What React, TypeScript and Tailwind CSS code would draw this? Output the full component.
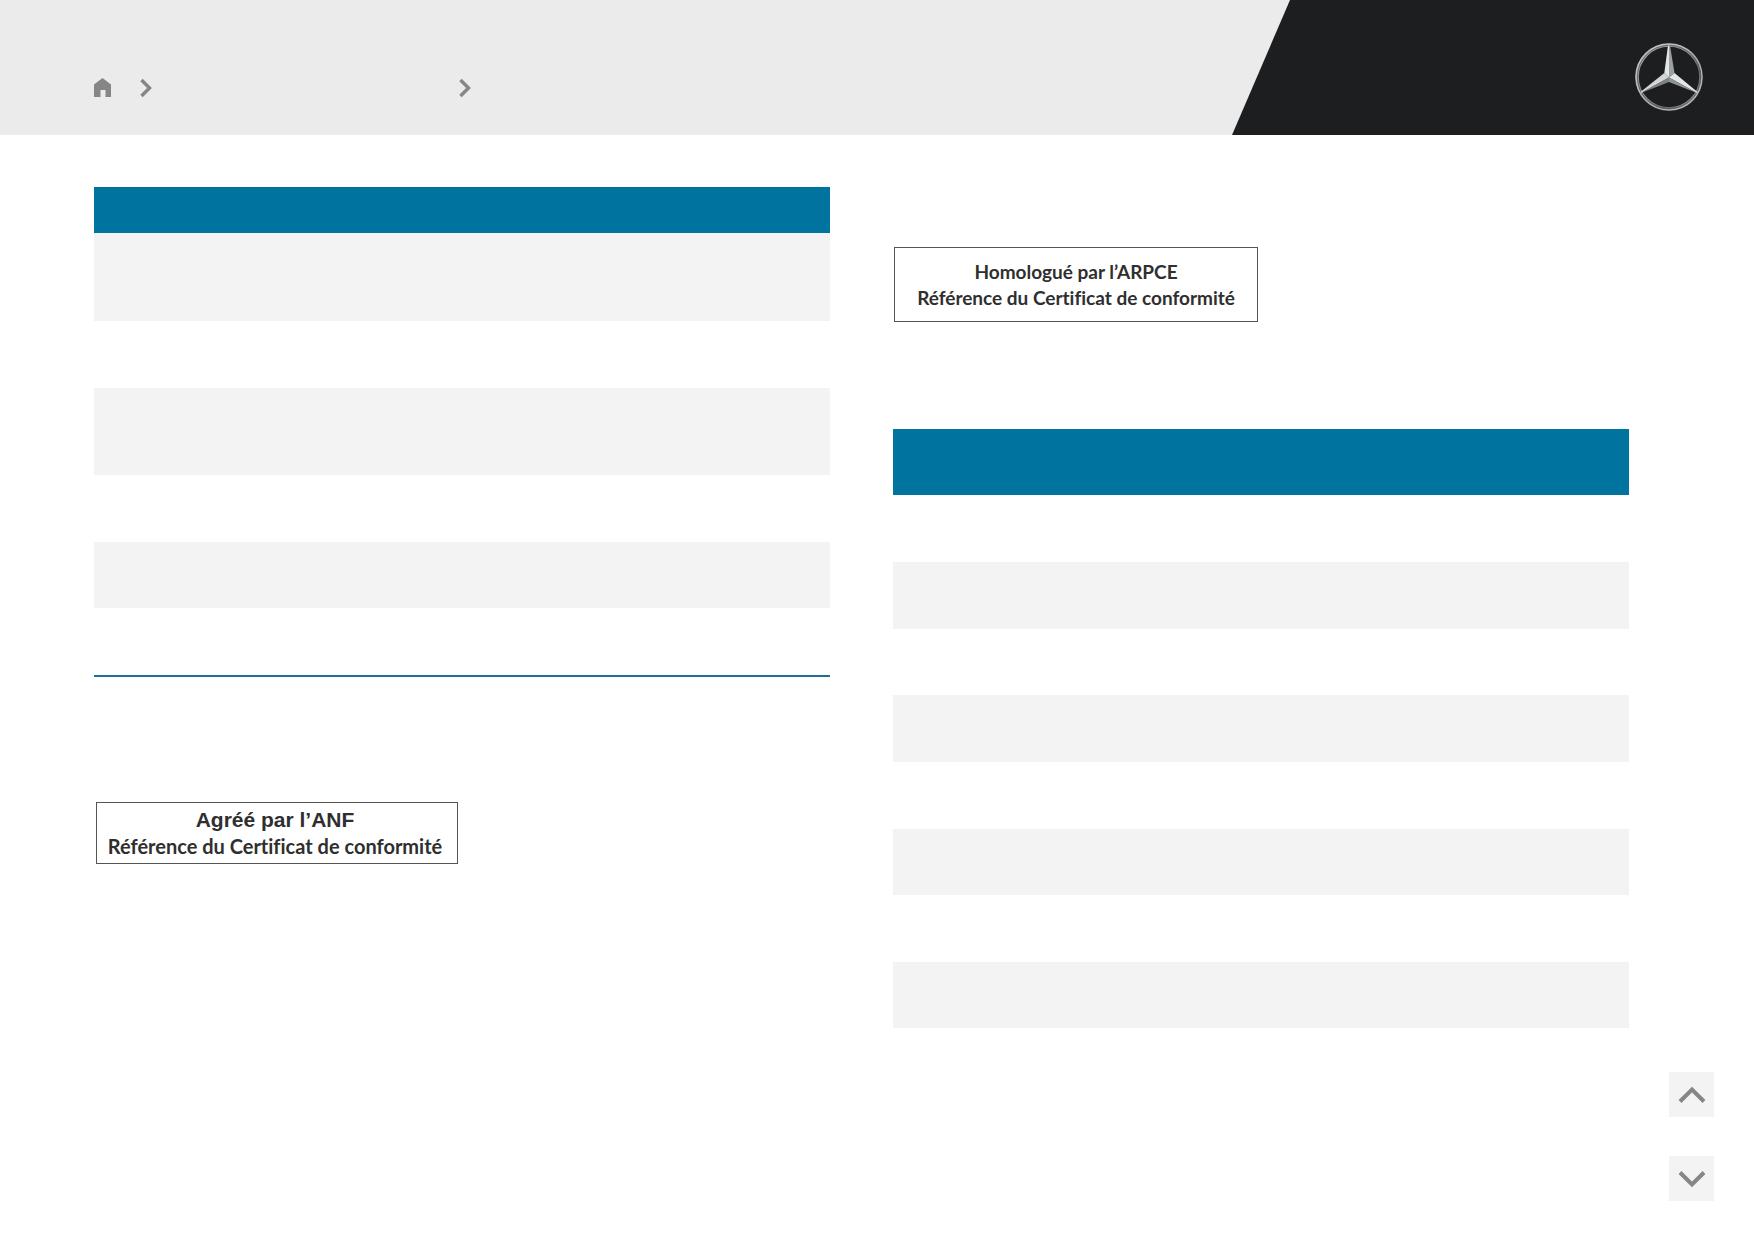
const leftRows = [
  { id: 'l1', height: 'h-[88px]', shaded: true },
  { id: 'l2', height: 'h-[67px]', shaded: false },
  { id: 'l3', height: 'h-[87px]', shaded: true },
  { id: 'l4', height: 'h-[67px]', shaded: false },
  { id: 'l5', height: 'h-[66px]', shaded: true },
  { id: 'l6', height: 'h-[67px]', shaded: false },
]

const rightRows = [
  { id: 'r1', height: 'h-[67px]', shaded: false },
  { id: 'r2', height: 'h-[67px]', shaded: true },
  { id: 'r3', height: 'h-[66px]', shaded: false },
  { id: 'r4', height: 'h-[67px]', shaded: true },
  { id: 'r5', height: 'h-[67px]', shaded: false },
  { id: 'r6', height: 'h-[66px]', shaded: true },
  { id: 'r7', height: 'h-[67px]', shaded: false },
  { id: 'r8', height: 'h-[66px]', shaded: true },
]

type Row = { id: string; height: string; shaded: boolean }

function StripedTable({ headHeight, rows }: { headHeight: string; rows: Row[] }) {
  return (
    <table className="w-full">
      <thead>
        <tr className="bg-[#00739f]">
          <th className={`p-0 ${headHeight}`} />
        </tr>
      </thead>
      <tbody>
        {rows.map((row) => (
          <tr key={row.id} className={row.shaded ? 'bg-[#f3f3f3]' : 'bg-white'}>
            <td className={`p-0 ${row.height}`} />
          </tr>
        ))}
      </tbody>
    </table>
  )
}

function Crumb() {
  return (
    <svg className="w-3 h-5 shrink-0" viewBox="0 0 12 20" fill="none" stroke="#868686" strokeWidth="3.4" aria-hidden="true">
      <path d="M1.500 2 9.500 10l-8 8" />
    </svg>
  )
}

function StarLogo() {
  return (
    <svg className="w-[70px] h-[70px]" viewBox="0 0 70 70" role="img" aria-label="Mercedes-Benz">
      <defs>
        <linearGradient id="ring" x1="0" y1="0" x2="1" y2="1">
          <stop offset="0" stopColor="#a9afb1" />
          <stop offset="0.45" stopColor="#8b9193" />
          <stop offset="0.7" stopColor="#6a7072" />
          <stop offset="1" stopColor="#a5abad" />
        </linearGradient>
      </defs>
      <circle cx="35" cy="35" r="32" fill="none" stroke="url(#ring)" strokeWidth="3.6" />
      <circle cx="35" cy="35" r="31.6" fill="none" stroke="#3f4446" strokeWidth="0.6" />
      <circle cx="35" cy="35" r="33" fill="none" stroke="#cdd1d2" strokeWidth="0.8" />
      <path d="M34 3.500h1v32l-4.700-4.500z" fill="#e4e6e6" />
      <path d="M35 3.500h1l4.500 27.500-5.500 4.500z" fill="#9ba0a2" />
      <path d="M30.300 31 35 35.500 7 51 6.500 50z" fill="#d3d6d7" />
      <path d="M35 35.500v4.500L7 51z" fill="#7d8487" />
      <path d="M40.500 31 63.500 50 63 51 35 35.500z" fill="#e3e6e7" />
      <path d="M35 35.500 63 51 35 40z" fill="#8f9597" />
    </svg>
  )
}

function Header() {
  return (
    <header className="flex justify-between h-[135px] bg-[#ebebeb]">
      <nav aria-label="Breadcrumb" className="flex items-center pl-[94px] pt-10">
        <a href="#" aria-label="Home">
          <svg className="w-[17px] h-5" viewBox="0 0 17 20" fill="#868686" aria-hidden="true">
            <path d="M8.500 0 17 6.500V19h-5.500v-7h-5v7H0V6.500z" />
          </svg>
        </a>
        <div className="flex items-center pl-[29px] gap-[307px]">
          <Crumb />
          <Crumb />
        </div>
      </nav>
      <div className="flex justify-end w-[522px] pt-[42px] pr-[50px] bg-[#1c1e1f] [clip-path:polygon(58px_0,100%_0,100%_100%,0_100%)]">
        <StarLogo />
      </div>
    </header>
  )
}

export default function App() {
  return (
    <div className="min-h-screen bg-white text-[#2f2f2f]">
      <Header />

      <main className="grid grid-cols-2 gap-[63px] pt-[52px] pb-10 pl-[94px] pr-[125px]">
        <section>
          <div className="border-b-2 border-[#1f6f94]">
            <StripedTable headHeight="h-[46px]" rows={leftRows} />
          </div>
          <div className="flex flex-col items-center w-[362px] h-[62px] mt-[125px] ml-0.5 pt-1 pr-1 border border-[#555] font-bold whitespace-nowrap">
            <p className="font-['Liberation_Sans',sans-serif] text-[21px] leading-[26px]">Agréé par l’ANF</p>
            <p className="font-[Lato,sans-serif] text-[20px] leading-[26px] [font-variant-ligatures:none]">Référence du Certificat de conformité</p>
          </div>
        </section>

        <section className="pt-[60px]">
          <div className="flex flex-col items-center w-[364px] h-[75px] mb-[107px] ml-px pt-[11px] border border-[#555] font-[Lato,sans-serif] font-bold text-[19px] leading-[26px] whitespace-nowrap [font-variant-ligatures:none]">
            <p>Homologué par l’ARPCE</p>
            <p>Référence du Certificat de conformité</p>
          </div>
          <StripedTable headHeight="h-[66px]" rows={rightRows} />
        </section>
      </main>

      <div className="fixed right-10 bottom-[39px] flex flex-col gap-[39px]">
        <button type="button" aria-label="Previous page" className="flex items-center justify-center size-[45px] bg-[#f3f3f3]">
          <svg className="w-7 h-[18px]" viewBox="0 0 28 18" fill="none" stroke="#868686" strokeWidth="4" aria-hidden="true">
            <path d="M2 15.500 14 3.500l12 12" />
          </svg>
        </button>
        <button type="button" aria-label="Next page" className="flex items-center justify-center size-[45px] bg-[#f3f3f3]">
          <svg className="w-7 h-[18px]" viewBox="0 0 28 18" fill="none" stroke="#868686" strokeWidth="4" aria-hidden="true">
            <path d="M2 2.500l12 12 12-12" />
          </svg>
        </button>
      </div>
    </div>
  )
}
